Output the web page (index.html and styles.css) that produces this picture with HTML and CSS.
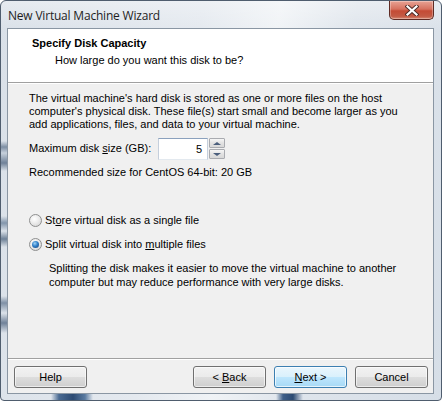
FILE: index.html
```html
<!DOCTYPE html>
<html>
<head>
<meta charset="utf-8">
<link rel="stylesheet" href="styles.css">
</head>
<body>
<div class="window">
  <div class="titlebar">
    <span class="title">New Virtual Machine Wizard</span>
    <div class="close">
      <svg width="14" height="11" viewBox="0 0 14 11">
        <path d="M2.5 1.5 L11.5 9.5 M11.5 1.5 L2.5 9.5" stroke="#4a2a26" stroke-width="4" stroke-linecap="square" fill="none"/>
        <path d="M2.5 1.5 L11.5 9.5 M11.5 1.5 L2.5 9.5" stroke="#ffffff" stroke-width="2.2" stroke-linecap="square" fill="none"/>
      </svg>
    </div>
  </div>
  <div class="client">
    <div class="header">
      <div class="h-title">Specify Disk Capacity</div>
      <div class="h-sub">How large do you want this disk to be?</div>
    </div>
    <div class="content">
      <p class="intro">The virtual machine's hard disk is stored as one or more files on the host<br>computer's physical disk. These file(s) start small and become larger as you<br>add applications, files, and data to your virtual machine.</p>
      <div class="size-row">
        <span class="size-label">Maximum disk <u>s</u>ize (GB):</span>
        <div class="spin">
          <div class="spin-input">5</div>
          <div class="spin-btns">
            <div class="spin-btn"><span class="tri-up"></span></div>
            <div class="spin-btn"><span class="tri-down"></span></div>
          </div>
        </div>
      </div>
      <p class="rec">Recommended size for CentOS 64-bit: 20 GB</p>
      <div class="radio-row first">
        <span class="radio"></span>
        <span>St<u>o</u>re virtual disk as a single file</span>
      </div>
      <div class="radio-row">
        <span class="radio checked"></span>
        <span>Split virtual disk into <u>m</u>ultiple files</span>
      </div>
      <p class="desc">Splitting the disk makes it easier to move the virtual machine to another<br>computer but may reduce performance with very large disks.</p>
    </div>
    <div class="footer">
      <button class="btn">Help</button>
      <div class="spacer"></div>
      <button class="btn">&lt; <u>B</u>ack</button>
      <button class="btn default"><u>N</u>ext &gt;</button>
      <button class="btn">Cancel</button>
    </div>
  </div>
</div>
</body>
</html>
```
FILE: styles.css
```css
html, body {
  margin: 0;
  padding: 0;
  background: #ffffff;
}

.window {
  width: 442px;
  height: 401px;
  box-sizing: border-box;
  border: 1px solid #4f5d6e;
  border-radius: 6px 6px 4px 4px;
  background:
    linear-gradient(to right, transparent 50px, #4a6a92 58px, #2c4a72 72px, #5a7aa0 84px, transparent 92px, transparent 275px, #3e5e88 282px, #2c4a72 292px, transparent 302px) left bottom / 100% 6px no-repeat,
    linear-gradient(to bottom, transparent 140px, #7d8ea3 146px, #c7d1dc 152px, #6f8198 162px, transparent 170px, transparent 215px, #8295ab 222px, transparent 230px, #6e8197 238px, transparent 246px, transparent 295px, #7f90a5 302px, transparent 312px, #6f8198 322px, transparent 332px) left top / 6px 100% no-repeat,
    linear-gradient(to bottom, rgba(255,255,255,0.35), rgba(255,255,255,0) 30px),
    linear-gradient(100deg, #d9e0e8 0%, #e4e9ef 40%, #f0f3f6 55%, #dfe5ec 70%, #d6dee7 100%);
  display: flex;
  flex-direction: column;
  padding: 0 7px 6px 6px;
  font-family: "Liberation Sans", Arial, sans-serif;
  font-size: 11px;
  color: #000;
}

.titlebar {
  height: 27px;
  display: flex;
  align-items: flex-start;
  position: relative;
}

.title {
  font-family: "Open Sans", "Noto Sans", sans-serif;
  font-size: 12px;
  color: #1e1e1e;
  margin-top: 6px;
  margin-left: 1px;
  letter-spacing: -0.2px;
}

.close {
  position: absolute;
  right: 0;
  top: 0;
  width: 45px;
  height: 19px;
  box-sizing: border-box;
  border: 1px solid #5e2b24;
  border-top: none;
  border-radius: 0 0 5px 5px;
  background: linear-gradient(to bottom, #e8a394 0%, #d6715f 45%, #c44b35 55%, #c35a44 85%, #d88a74 100%);
  display: flex;
  align-items: center;
  justify-content: center;
  box-shadow: inset 0 0 0 1px rgba(255,255,255,0.3);
}

.client {
  flex: 1;
  border: 1px solid #8a96a3;
  background: #f0f0f0;
  display: flex;
  flex-direction: column;
}

.header {
  background: #ffffff;
  height: 53px;
  border-bottom: 1px solid #a0a0a0;
  box-shadow: 0 1px 0 #ffffff;
  flex: none;
}

.h-title {
  font-weight: bold;
  margin: 8px 0 0 24px;
  line-height: 13px;
}

.h-sub {
  margin: 4px 0 0 47px;
  line-height: 13px;
}

.content {
  flex: 1;
  padding: 9px 0 0 21px;
  line-height: 13px;
}

.intro {
  margin: 0;
}

.size-row {
  display: flex;
  align-items: center;
  margin-top: 7px;
}

.size-label {
  width: 129px;
  padding-bottom: 1px;
}

.spin {
  display: flex;
  height: 22px;
}

.spin-input {
  width: 50px;
  box-sizing: border-box;
  border: 1px solid #abadb3;
  border-top-color: #8ba1bd;
  border-left-color: #c5cfdc;
  border-right-color: #c5cfdc;
  border-bottom-color: #e3e9ef;
  background: #fff;
  text-align: right;
  padding: 4px 5px 0 0;
}

.spin-btns {
  display: flex;
  flex-direction: column;
  margin-left: 1px;
  gap: 1px;
}

.spin-btn {
  width: 16px;
  height: 10px;
  box-sizing: border-box;
  border: 1px solid #a9abb0;
  border-radius: 1px;
  background: linear-gradient(to bottom, #f6f6f6, #e2e2e2 50%, #d8d8d8);
  display: flex;
  align-items: center;
  justify-content: center;
}

.tri-up {
  width: 0;
  height: 0;
  border-left: 4px solid transparent;
  border-right: 4px solid transparent;
  border-bottom: 3px solid #4a5e7c;
}

.tri-down {
  width: 0;
  height: 0;
  border-left: 4px solid transparent;
  border-right: 4px solid transparent;
  border-top: 3px solid #4a5e7c;
}

.rec {
  margin: 6px 0 0 0;
}

.radio-row {
  display: flex;
  align-items: center;
  gap: 3px;
  height: 13px;
  margin-top: 11px;
}

.radio-row.first {
  margin-top: 35px;
}

.radio {
  width: 13px;
  height: 13px;
  box-sizing: border-box;
  border-radius: 50%;
  border: 1px solid #8e8f8f;
  background: radial-gradient(circle at 40% 35%, #ffffff 0%, #eeeeee 40%, #cfcfcf 100%);
  display: flex;
  align-items: center;
  justify-content: center;
  flex: none;
}

.radio.checked::after {
  content: "";
  width: 7px;
  height: 7px;
  border-radius: 50%;
  background: radial-gradient(circle at 40% 35%, #9fd3f6 0%, #2f7fc8 45%, #1a3f74 100%);
}

.desc {
  margin: 10px 0 0 20px;
  line-height: 14px;
}

.footer {
  flex: none;
  height: 35px;
  box-sizing: border-box;
  border-top: 1px solid #a0a0a0;
  box-shadow: inset 0 1px 0 #ffffff;
  display: flex;
  align-items: flex-start;
  padding: 7px 5px 0 6px;
  gap: 8px;
}

.spacer {
  flex: 1;
}

.btn {
  width: 73px;
  height: 22px;
  box-sizing: border-box;
  border: 1px solid #707070;
  border-radius: 3px;
  background: linear-gradient(to bottom, #f2f2f2 0%, #ebebeb 50%, #dddddd 51%, #cfcfcf 100%);
  box-shadow: inset 0 0 0 1px rgba(255,255,255,0.6);
  font-family: "Liberation Sans", Arial, sans-serif;
  font-size: 11px;
  color: #000;
  padding: 0;
}

.btn.default {
  border-color: #3c7fb1;
  background: linear-gradient(to bottom, #eaf6fd 0%, #d9f0fc 50%, #bee6fd 51%, #a7d9f5 100%);
  box-shadow: inset 0 0 0 1px rgba(255,255,255,0.7);
}
```
